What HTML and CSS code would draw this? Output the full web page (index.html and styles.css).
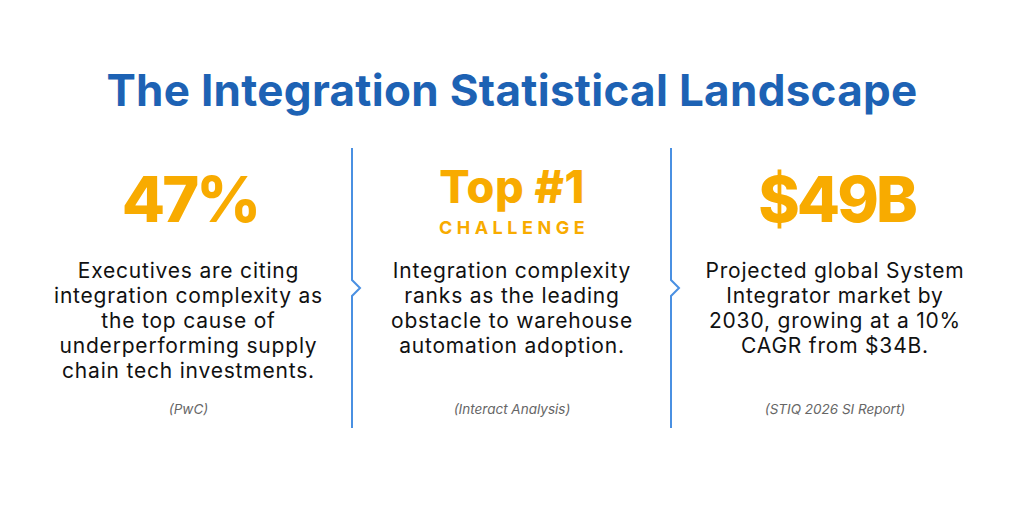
FILE: index.html
```html
<!DOCTYPE html>
<html lang="en">
<head>
<meta charset="utf-8">
<title>The Integration Statistical Landscape</title>
<link rel="stylesheet" href="styles.css">
</head>
<body>
<main class="page">
  <h1 class="title">The Integration Statistical Landscape</h1>
  <section class="stats">
    <div class="stat stat-first">
      <div class="figure">
        <div class="big">47%</div>
      </div>
      <p class="desc">Executives are citing<br>integration complexity as<br>the top cause of<br>underperforming supply<br>chain tech investments.</p>
      <p class="source">(PwC)</p>
    </div>
    <svg class="divider" viewBox="0 0 12 280" width="12" height="280" aria-hidden="true">
      <path d="M1 0 V132 L9 140 L1 148 V280" fill="none" stroke="#4a90e2" stroke-width="2"/>
    </svg>
    <div class="stat">
      <div class="figure">
        <div class="mid">Top #1</div>
        <div class="label">CHALLENGE</div>
      </div>
      <p class="desc">Integration complexity<br>ranks as the leading<br>obstacle to warehouse<br>automation adoption.</p>
      <p class="source">(Interact Analysis)</p>
    </div>
    <svg class="divider" viewBox="0 0 12 280" width="12" height="280" aria-hidden="true">
      <path d="M1 0 V132 L9 140 L1 148 V280" fill="none" stroke="#4a90e2" stroke-width="2"/>
    </svg>
    <div class="stat stat-last">
      <div class="figure">
        <div class="big">$49B</div>
      </div>
      <p class="desc">Projected global System<br>Integrator market by<br>2030, growing at a 10%<br>CAGR from $34B.</p>
      <p class="source">(STIQ 2026 SI Report)</p>
    </div>
  </section>
</main>
</body>
</html>
```

FILE: styles.css
```css
html, body {
  margin: 0;
  padding: 0;
  background: #ffffff;
}
body {
  width: 1024px;
  height: 512px;
  overflow: hidden;
  font-family: Inter, "Noto Sans", "Liberation Sans", sans-serif;
}
.page {
  display: flex;
  flex-direction: column;
  align-items: center;
  padding-top: 63px;
}
.title {
  margin: 0;
  font-size: 44px;
  line-height: 54px;
  font-weight: 700;
  color: #1d62b4;
  letter-spacing: 0.3px;
}
.stats {
  margin-top: 31px;
  width: 955px;
  display: grid;
  grid-template-columns: 1fr 2px 1fr 2px 1fr;
  align-items: stretch;
}
.divider {
  display: block;
  overflow: visible;
  margin-left: -1px;
}
.stat {
  height: 280px;
  display: flex;
  flex-direction: column;
  align-items: center;
  text-align: center;
}
.stat-first {
  padding-right: 9px;
}
.stat-last {
  padding-left: 8px;
}
.figure {
  height: 110px;
  display: flex;
  flex-direction: column;
  align-items: center;
  justify-content: flex-start;
}
.big {
  margin-top: 15px;
  font-size: 63px;
  line-height: 72px;
  font-weight: 800;
  color: #f8ab00;
  letter-spacing: -3px;
  padding-left: 3px;
}
.mid {
  margin-top: 14px;
  font-size: 45px;
  line-height: 50px;
  font-weight: 800;
  color: #f8ab00;
  letter-spacing: 0.5px;
}
.label {
  margin-top: 5px;
  font-size: 18px;
  line-height: 22px;
  font-weight: 700;
  letter-spacing: 4.5px;
  color: #f8ab00;
  padding-left: 4px;
}
.desc {
  margin: 0;
  font-size: 21px;
  line-height: 25px;
  letter-spacing: 0.8px;
  color: #111111;
  white-space: nowrap;
}
.source {
  margin: auto 0 10px;
  font-size: 13.5px;
  line-height: 18px;
  font-style: italic;
  color: #666666;
}
```
